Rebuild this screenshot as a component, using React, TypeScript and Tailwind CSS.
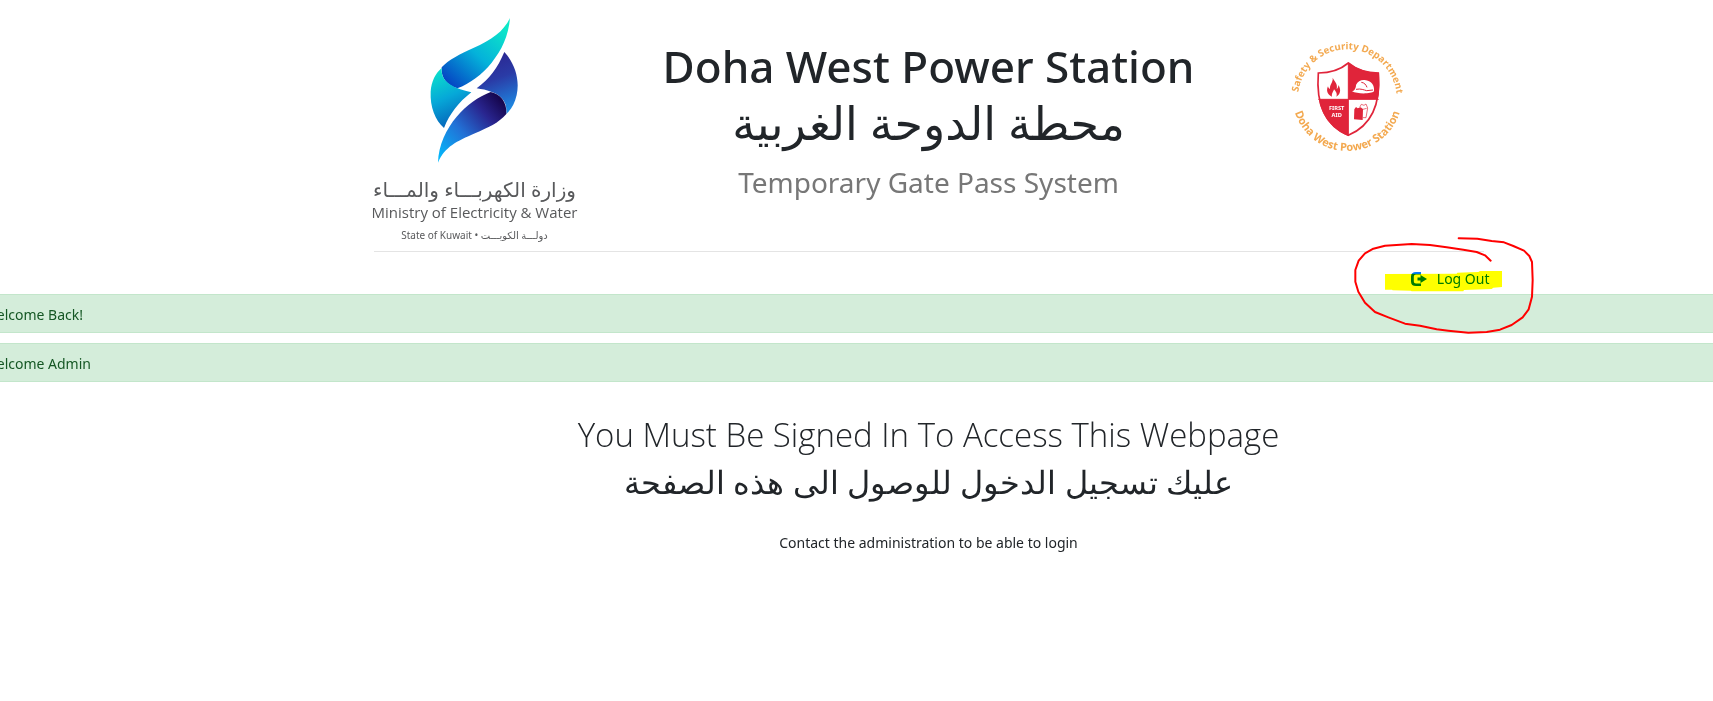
function MinistryEmblem() {
  return (
    <svg viewBox="0 0 330 480" className="h-40 w-[110px]" aria-hidden="true">
      <defs>
        <linearGradient id="leafTop" x1="0.9" y1="0.1" x2="0.15" y2="0.95">
          <stop offset="0" stopColor="#0de8c8" />
          <stop offset="0.5" stopColor="#04b2da" />
          <stop offset="1" stopColor="#0548c4" />
        </linearGradient>
        <linearGradient id="leafLeft" x1="0.2" y1="0" x2="0.5" y2="1">
          <stop offset="0" stopColor="#0be3cb" />
          <stop offset="0.5" stopColor="#06a8d8" />
          <stop offset="1" stopColor="#0560b8" />
        </linearGradient>
        <linearGradient id="leafRight" x1="0.5" y1="0" x2="0.75" y2="1">
          <stop offset="0" stopColor="#2b2690" />
          <stop offset="0.4" stopColor="#2a3ba6" />
          <stop offset="1" stopColor="#1c93ea" />
        </linearGradient>
        <linearGradient id="leafBottom" x1="0.95" y1="0.15" x2="0.05" y2="0.95">
          <stop offset="0" stopColor="#16064e" />
          <stop offset="0.25" stopColor="#29258f" />
          <stop offset="0.6" stopColor="#2271d6" />
          <stop offset="1" stopColor="#04b6fa" />
        </linearGradient>
      </defs>
      <path fill="url(#leafTop)" d="M270 24C265 80 245 120 215 158C185 195 150 220 112 235C82 226 62 205 65 172C85 150 120 132 160 114C215 90 250 65 270 24Z" />
      <path fill="url(#leafLeft)" d="M65 174C62 210 88 232 154 247C115 278 90 310 72 354C45 330 30 290 32 245C34 215 46 190 65 174Z" />
      <path fill="url(#leafRight)" d="M253 126C285 160 300 210 290 255C284 280 275 297 259 312C263 270 240 245 170 235C210 205 232 175 253 126Z" />
      <path fill="url(#leafBottom)" d="M212 246C240 252 262 275 259 312C235 340 205 352 165 370C110 394 75 410 54 458C55 405 80 355 110 320C140 285 175 260 212 246Z" />
    </svg>
  );
}

function SafetyBadge() {
  return (
    <svg viewBox="0 0 450 405" className="h-[135px] w-[150px]" role="img" aria-label="Safety and Security Department">
      <defs>
        <path id="arcTop" d="M84 206A148 148 0 0 1 380 206A148 148 0 0 1 378 230" />
        <path id="arcBottom" d="M67 198A165 165 0 0 0 397 198" />
        <clipPath id="shield">
          <path d="M235 97C260 118 292 128 327 128C334 215 312 285 235 318C158 285 136 215 143 128C178 128 210 118 235 97Z" />
        </clipPath>
      </defs>
      <g className="font-['Open_Sans'] font-bold" fill="#f3a950" textAnchor="middle">
        <text fontSize="29">
          <textPath href="#arcTop" startOffset="48%">Safety &amp; Security Department</textPath>
        </text>
        <text fontSize="33">
          <textPath href="#arcBottom" startOffset="50%">Doha West Power Station</textPath>
        </text>
      </g>
      <g clipPath="url(#shield)">
        <rect x="130" y="90" width="210" height="235" fill="#fff" />
        <path fill="#e0243a" d="M235 90H340V208H235ZM130 208H235V325H130Z" />
      </g>
      <path d="M235 99C260 120 292 129 325 129C332 215 311 284 235 316C159 284 138 215 145 129C178 129 210 120 235 99Z" fill="none" stroke="#e0243a" strokeWidth="5" />
      <path d="M235 100V316M145 208H326" stroke="#e0243a" strokeWidth="3" />
      <path fill="#e0243a" d="M188 143C194 155 204 162 200 177C204 175 205 170 205 165C215 180 210 194 199 200C203 191 197 184 192 178C190 186 184 190 186 200C172 194 168 181 174 169C175 174 177 176 180 177C178 163 190 157 188 143Z" />
      <path fill="#fff" d="M246 184C255 182 258 172 258 165C264 152 276 148 288 151C304 153 314 166 312 184C304 192 262 193 246 184Z" />
      <path fill="none" stroke="#e0243a" strokeWidth="3" d="M258 178C273 175 282 180 290 182L309 180M274 157C283 158 288 164 291 172" />
      <path fill="#e0243a" d="M253 238L258 231L263 235L272 232L279 237L278 270L252 268Z" />
      <path fill="none" stroke="#e0243a" strokeWidth="2" d="M269 232L274 223L282 226L288 222L293 234L288 263L279 263M279 238L290 235" />
      <g className="font-['Noto_Sans'] font-bold" fill="#fff" fontSize="17" textAnchor="middle">
        <text x="200" y="241">FIRST</text>
        <text x="200" y="262">AID</text>
      </g>
    </svg>
  );
}

function LogOutIcon() {
  return (
    <svg viewBox="0 0 16 14" className="h-[14px] w-4" fill="currentColor" aria-hidden="true">
      <path d="M10 0V2.500H5Q2.800 2.500 2.800 4.500V9.500Q2.800 11.500 5 11.500H10V14H5Q0 14 0 9.500V4.500Q0 0 5 0Z" />
      <path d="M6.500 5.500H9.500V3L16 7L9.500 11V8.500H6.500Z" />
    </svg>
  );
}

function LogOutMarkup() {
  return (
    <>
      <svg viewBox="0 0 630 330" className="pointer-events-none absolute -top-[37px] -left-[71px] h-[110px] w-[210px] max-w-none mix-blend-multiply" aria-hidden="true">
        <path fill="#ff0" d="M135 132L350 131L352 128L415 126L420 123H486V171L460 173L455 177L372 180L370 184H215L212 182L158 181L156 179H135Z" />
      </svg>
      <svg viewBox="0 0 630 330" className="pointer-events-none absolute -top-[37px] -left-[71px] h-[110px] w-[210px] max-w-none" aria-hidden="true">
        <path fill="none" stroke="#f00" strokeWidth="6" strokeLinecap="round" strokeLinejoin="round" d="M356 25L412 26L455 33L492 37L520 48L552 62L568 78L576 96L578 150L576 200L566 238L548 262L515 285L480 299L440 306L385 308L325 302L290 298L240 287L195 281L145 262L105 246L75 218L55 185L46 155L46 120L56 92L75 70L100 56L135 47L215 42L270 45L320 52L370 59L410 66L435 76L452 92" />
      </svg>
    </>
  );
}

function Alert({ children }: { children: string }) {
  return (
    <div role="alert" className="border border-[#c3e6cb] bg-[#d4edda] px-1.5 pt-2 pb-1.5 text-[14px] leading-[23px] text-[#155724]">
      {children}
    </div>
  );
}

export default function App() {
  return (
    <div className="overflow-x-hidden bg-white font-['Noto_Sans','DejaVu_Sans',sans-serif] text-[#212529]">
      <div className="-mr-[167px] -ml-[23px]">
        <header className="mx-auto grid max-w-[1110px] grid-cols-4 border-b border-[#e4e4e4] pb-2">
          <div className="flex w-[202px] flex-col items-center pt-[10px] text-[#58595b]">
            <MinistryEmblem />
            <p lang="ar" dir="rtl" className="mt-2 text-[20px] leading-6 whitespace-nowrap">وزارة الكهربـــاء والمـــاء</p>
            <p className="font-['Open_Sans'] text-[15px] leading-5 font-medium whitespace-nowrap">Ministry of Electricity &amp; Water</p>
            <p className="mt-[5px] text-[10px] leading-4 whitespace-nowrap">State of Kuwait • <span lang="ar">دولـــة الكويـــت</span></p>
          </div>
          <div className="col-span-2 pt-[38px] text-center">
            <h1 className="text-[44px] leading-14 font-medium whitespace-nowrap">
              Doha West Power Station
              <br />
              <span lang="ar" className="text-[46px]">محطة الدوحة الغربية</span>
            </h1>
            <p className="mt-[11px] text-[28px] leading-10 text-[#777]">Temporary Gate Pass System</p>
          </div>
          <div className="flex justify-center pt-[30px]">
            <SafetyBadge />
          </div>
        </header>
        <nav className="mx-auto flex h-[42px] max-w-[1122px] items-center justify-end pt-3">
          <a href="#logout" className="relative flex items-center gap-[10px] text-[14px] leading-6 whitespace-nowrap text-[#007bff]">
            <LogOutIcon />
            Log Out
            <LogOutMarkup />
          </a>
        </nav>
        <div className="flex flex-col gap-[10px]">
          <Alert>Welcome Back!</Alert>
          <Alert>Welcome Admin</Alert>
        </div>
        <main className="pt-[29px] text-center">
          <h2 className="font-['Open_Sans','DejaVu_Sans',sans-serif] text-[33px] leading-[47px] font-light">
            You Must Be Signed In To Access This Webpage
            <br />
            <span lang="ar" className="text-[32px]">عليك تسجيل الدخول للوصول الى هذه الصفحة</span>
          </h2>
          <p className="mt-[26px] text-[14px] leading-6">Contact the administration to be able to login</p>
        </main>
      </div>
    </div>
  );
}
